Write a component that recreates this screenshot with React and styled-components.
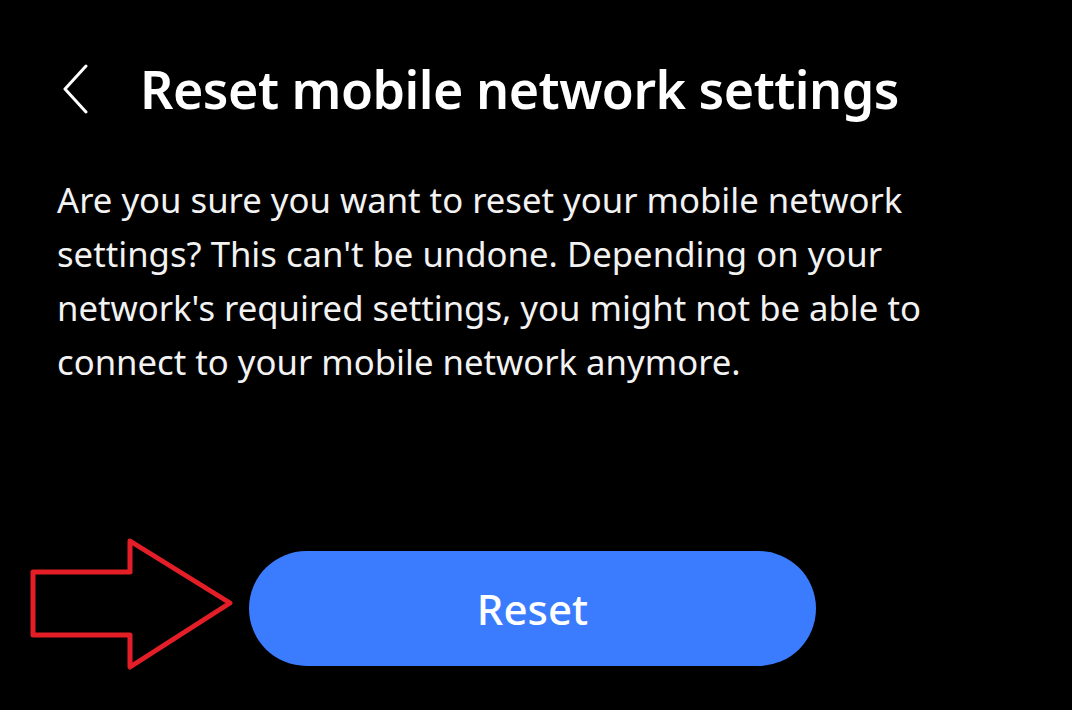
import React from "react";
import styled, { createGlobalStyle } from "styled-components";

const Global = createGlobalStyle`
  html, body { margin: 0; padding: 0; background: #000; }
  body { font-family: "Noto Sans", "Open Sans", sans-serif; }
`;

const Screen = styled.div`
  position: relative;
  width: 1072px;
  height: 710px;
  background: #000;
  color: #fff;
  overflow: hidden;
  display: flex;
  flex-direction: column;
  padding: 53px 0 0 57px;
  box-sizing: border-box;
`;

const Header = styled.div`
  display: flex;
  align-items: center;
  height: 72px;
`;

const BackButton = styled.button`
  background: none;
  border: 0;
  padding: 0;
  margin: 0 49px 0 4px;
  width: 30px;
  height: 50px;
  display: flex;
  align-items: center;
  justify-content: center;
  cursor: pointer;
`;

const Title = styled.h1`
  margin: 0;
  font-size: 52px;
  font-weight: 600;
  letter-spacing: -0.5px;
  line-height: 72px;
  color: #fff;
`;

const Body = styled.p`
  margin: 48px 0 0 0;
  width: 960px;
  font-size: 34.7px;
  line-height: 54px;
  color: #f2f2f2;
  font-weight: 400;
`;

const ButtonRow = styled.div`
  margin-top: auto;
  margin-bottom: 44px;
  display: flex;
  justify-content: flex-start;
  padding-left: 192px;
`;

const ResetButton = styled.button`
  width: 567px;
  height: 115px;
  border: 0;
  border-radius: 58px;
  background: #3a7cfd;
  color: #fff;
  font-family: "Noto Sans", "Open Sans", sans-serif;
  font-size: 42px;
  font-weight: 500;
  cursor: pointer;
`;

const Annotation = styled.svg`
  position: absolute;
  left: 0;
  top: 0;
  pointer-events: none;
`;

export default function App() {
  return (
    <>
      <Global />
      <Screen>
        <Header>
          <BackButton aria-label="Back">
            <svg width="30" height="50" viewBox="0 0 30 50">
              <path d="M25 2 L4 25 L25 48" fill="none" stroke="#fff" strokeWidth="3" strokeLinecap="round" strokeLinejoin="round" />
            </svg>
          </BackButton>
          <Title>Reset mobile network settings</Title>
        </Header>
        <Body>
          Are you sure you want to reset your mobile network settings? This can't be undone. Depending on your network's required settings, you might not be able to connect to your mobile network anymore.
        </Body>
        <ButtonRow>
          <ResetButton>Reset</ResetButton>
        </ButtonRow>
        <Annotation width="1072" height="710" viewBox="0 0 1072 710">
          <path
            d="M33 572 L130 572 L130 541 L230 603 L130 667 L130 635 L33 635 Z"
            fill="none"
            stroke="#e41e26"
            strokeWidth="5"
            strokeLinejoin="round"
          />
        </Annotation>
      </Screen>
    </>
  );
}
